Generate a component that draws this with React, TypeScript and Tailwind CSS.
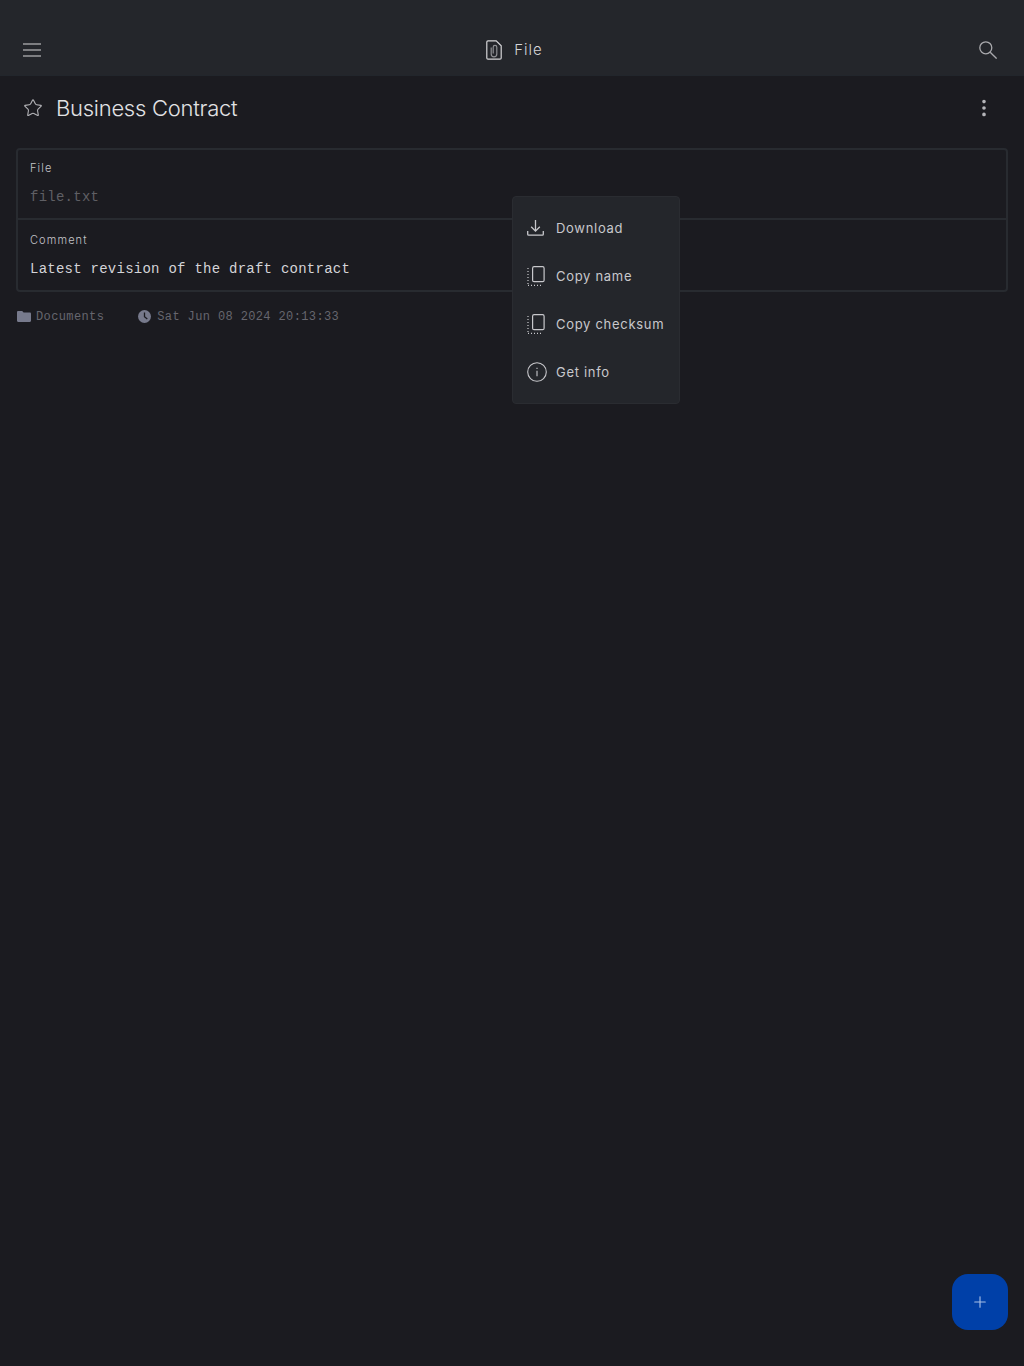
import React from 'react';
import { Star, EllipsisVertical, Plus } from 'lucide-react';

const sans = 'font-["Inter",sans-serif]';
const mono = 'font-["Liberation_Mono",monospace]';

const MenuIcon = () => (
    <svg width="18" height="14" viewBox="0 0 18 14" fill="none" stroke="currentColor" strokeWidth="1.2">
        <path d="M0 1h18M0 7h18M0 13h18" />
    </svg>
);

const SearchIcon = () => (
    <svg width="18" height="18" viewBox="0 0 18 18" fill="none" stroke="currentColor" strokeWidth="1.3">
        <circle cx="6.8" cy="6.8" r="6" />
        <path d="M11.2 11.2 17.6 17.6" />
    </svg>
);

const DownloadIcon = () => (
    <svg width="17" height="16" viewBox="0 0 17 16" fill="none" stroke="currentColor" strokeWidth="1.3">
        <path d="M8.5 0v11M4.2 6.8l4.3 4.3 4.3-4.3" />
        <path d="M.7 11v3.2c0 .6.4 1 1 1h13.600c.6 0 1-.4 1-1V11" />
    </svg>
);

const CopyIcon = () => (
    <svg width="18" height="20" viewBox="0 0 18 20" fill="none" stroke="currentColor">
        <rect x="5.6" y=".7" width="11.5" height="15" rx="1.5" strokeWidth="1.2" />
        <path d="M1 2V19M1 19.3H14" strokeWidth="1.2" strokeDasharray="1 2" />
    </svg>
);

const InfoIcon = () => (
    <svg width="20" height="20" viewBox="0 0 20 20" fill="none" stroke="currentColor" strokeWidth="1.1">
        <circle cx="10" cy="10" r="9.3" />
        <path d="M10 8.8v5.4M10 5.8v1.3" />
    </svg>
);

const FileClipIcon = () => (
    <svg width="16" height="20" viewBox="0 0 16 20" fill="none" stroke="currentColor" strokeWidth="1.2">
        <path d="M2 .8h8.2l5 5V18c0 .7-.5 1.2-1.2 1.2H2c-.7 0-1.2-.5-1.2-1.2V2C.8 1.300 1.300.8 2 .8Z" />
        <path d="M5.2 7.500v6.500a2.800 2.800 0 0 0 5.600 0V7.200a1.800 1.800 0 0 0-3.600 0V13.500" strokeOpacity="0.6" />
    </svg>
);

const FolderIcon = () => (
    <svg width="14" height="11" viewBox="0 0 14 11" fill="#777a8c">
        <path d="M1.2 0h4l1.400 1.5h6.200c.7 0 1.200.5 1.200 1.200v7c0 .7-.5 1.200-1.200 1.200H1.200C.5 10.900 0 10.400 0 9.700V1.200C0 .5.500 0 1.200 0Z" />
    </svg>
);

const ClockIcon = () => (
    <svg width="13" height="13" viewBox="0 0 13 13">
        <circle cx="6.5" cy="6.5" r="6.5" fill="#777a8c" />
        <path d="M6.5 2.500v4.200l2.800 2.200" fill="none" stroke="#1b1b20" strokeWidth="1.3" />
    </svg>
);

const menuItems = [
    { label: 'Download', icon: <DownloadIcon /> },
    { label: 'Copy name', icon: <CopyIcon /> },
    { label: 'Copy checksum', icon: <CopyIcon /> },
    { label: 'Get info', icon: <InfoIcon /> },
];

export default function App() {
    return (
        <div className={`relative h-[1366px] w-full overflow-hidden bg-[#1b1b20] ${sans}`}>
            {/* Header */}
            <header className="flex h-[76px] items-end justify-between border-b border-[#22262c] bg-[#24262b] pb-[13px] pl-[23px] pr-[27px]">
                <div className="flex h-[24px] items-center text-[#d5d5d8]">
                    <MenuIcon />
                </div>
                <div className="ml-[9px] flex h-[24px] items-center gap-[12px] text-[#d5d5d8]">
                    <FileClipIcon />
                    <span className="text-[15px] font-light tracking-[1px]">File</span>
                </div>
                <div className="flex h-[24px] items-center text-[#a9a9ad]">
                    <SearchIcon />
                </div>
            </header>

            {/* Title */}
            <div className="flex h-[64px] items-center justify-between pl-[23px] pr-[34px]">
                <div className="flex items-center gap-[13px]">
                    <Star size={20} strokeWidth={1.3} className="text-[#b4b4b8]" />
                    <h1 className="text-[22px] font-light tracking-[-0.26px] text-[#e2e2e5]">Business Contract</h1>
                </div>
                <EllipsisVertical size={22} strokeWidth={2} className="mr-[-5px] text-[#b4b4b8]" />
            </div>

            {/* Fields */}
            <div className="mx-[16px] mt-[8px] rounded-[4px] border-2 border-[#282b30]">
                <div className="h-[70px] border-b-2 border-[#282b30] px-[12px] pt-[11px]">
                    <div className="text-[11px] font-light leading-[14px] tracking-[1.1px] text-[#c4c4c8]">File</div>
                    <div className={`mt-[12px] text-[14px] leading-[20px] tracking-[0.25px] text-[#5f5f64] ${mono}`}>file.txt</div>
                </div>
                <div className="h-[70px] px-[12px] pt-[13px]">
                    <div className="text-[11px] font-light leading-[14px] tracking-[1.1px] text-[#c4c4c8]">Comment</div>
                    <div className={`mt-[12px] text-[14px] leading-[20px] tracking-[0.25px] text-[#d4d4d8] ${mono}`}>Latest revision of the draft contract</div>
                </div>
            </div>

            {/* Meta */}
            <div className={`mx-[17px] mt-[16px] flex items-center text-[12px] leading-[18px] tracking-[0.38px] text-[#66666e] ${mono}`}>
                <span className="-mt-[2px] flex"><FolderIcon /></span>
                <span className="ml-[5px]">Documents</span>
                <span className="ml-[34px] -mt-[1px] flex"><ClockIcon /></span>
                <span className="ml-[6px]">Sat Jun 08 2024 20:13:33</span>
            </div>

            {/* Dropdown menu */}
            <div className="absolute left-[512px] top-[196px] w-[168px] rounded-[4px] border border-[#2a2c31] bg-[#24262b] py-[7px]">
                {menuItems.map((item) => (
                    <div key={item.label} className="flex h-[48px] items-center text-[#c8c8cc]">
                        <div className="ml-[14px] flex w-[20px] justify-start">{item.icon}</div>
                        <span className="ml-[9px] h-[20px] whitespace-nowrap text-[13px] leading-[20px] tracking-[0.7px]">{item.label}</span>
                    </div>
                ))}
            </div>

            {/* FAB */}
            <button className="absolute bottom-[36px] right-[16px] flex h-[56px] w-[56px] items-center justify-center rounded-[16px] bg-[#0040a8]">
                <Plus size={18} strokeWidth={1.5} className="text-[#a8bfe6]" />
            </button>
        </div>
    );
}
